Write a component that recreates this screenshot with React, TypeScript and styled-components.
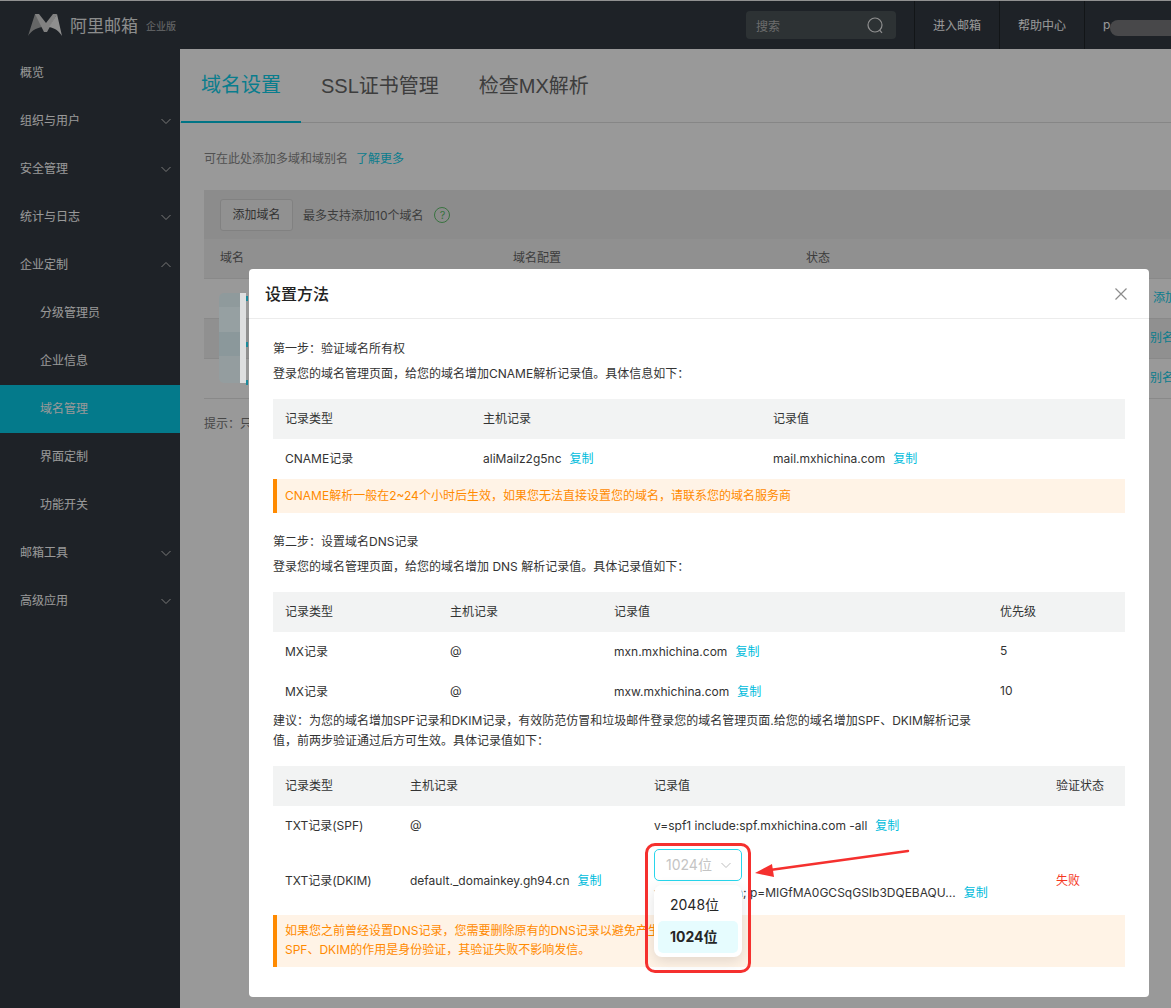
import React from "react";
import styled, { createGlobalStyle } from "styled-components";

const FONT = `Inter, "Noto Sans CJK SC", sans-serif`;
const CYAN = "#00c1de";
const LINK = "#00bcdc";

const GlobalStyle = createGlobalStyle`
  html, body {
    margin: 0;
    height: 100%;
    overflow: hidden;
    background: #fff;
    font-family: ${FONT};
    font-size: 12px;
    color: #333;
  }
  * { box-sizing: border-box; }
`;

const Page = styled.div`
  position: relative;
  width: 1171px;
  height: 1008px;
  overflow: hidden;
`;

const TopBar = styled.header`
  display: flex;
  align-items: center;
  height: 49px;
  background: #323941;
  border-top: 1px solid #f2f2f2;
`;

const Brand = styled.div`
  display: flex;
  align-items: center;
  width: 746px;
  padding-left: 27px;
  color: #fff;
`;

const BrandName = styled.span`
  margin-left: 7px;
  margin-bottom: 2px;
  font-size: 17px;
  opacity: 0.9;
`;

const BrandEdition = styled.span`
  margin-left: 8px;
  margin-top: 1px;
  font-size: 10px;
  opacity: 0.6;
`;

const SearchBox = styled.div`
  display: flex;
  align-items: center;
  justify-content: space-between;
  width: 150px;
  height: 28px;
  margin-right: 18px;
  padding: 0 12px 0 10px;
  border-radius: 4px;
  background: #4b5458;
  color: #b5b5b5;
  font-size: 12px;
`;

const TopLink = styled.div`
  display: flex;
  align-items: center;
  justify-content: center;
  width: 85px;
  height: 48px;
  padding-bottom: 2px;
  border-left: 1px solid #1f2327;
  color: #fff;
  font-size: 12px;
`;

const UserLink = styled(TopLink)`
  position: relative;
  flex: 1;
  justify-content: flex-start;
  padding-left: 18px;
`;

const UserBlur = styled.div`
  position: absolute;
  left: 25px;
  top: 19px;
  width: 70px;
  height: 16px;
  border-radius: 8px;
  background: #78797c;
`;

const Content = styled.div`
  display: flex;
  height: 959px;
`;

const Sidebar = styled.nav`
  flex: 0 0 180px;
  background: #323941;
`;

const NavItem = styled.div<{ $sub?: boolean; $active?: boolean }>`
  display: flex;
  align-items: center;
  justify-content: space-between;
  height: 48px;
  padding: 0 9px 4px ${(p) => (p.$sub ? 40 : 20)}px;
  background: ${(p) => (p.$active ? "#08cbe8" : "transparent")};
  color: #fff;
  font-size: 12px;

  svg {
    margin-top: 4px;
  }
`;

const Main = styled.main`
  flex: 1;
  min-width: 0;
  background: #fff;
`;

const Tabs = styled.div`
  display: flex;
  height: 74px;
  padding-left: 1px;
  border-bottom: 1px solid #e0e0e0;
`;

const Tab = styled.div<{ $active?: boolean }>`
  display: flex;
  align-items: center;
  justify-content: center;
  height: 74px;
  padding: 0 20px 4px;
  border-bottom: ${(p) => (p.$active ? `2px solid ${CYAN}` : "none")};
  color: ${(p) => (p.$active ? "#10d0ec" : "#666")};
  font-family: "Liberation Sans", "Noto Sans CJK SC", sans-serif;
  font-size: 20px;
`;

const MainBody = styled.div`
  padding: 28px 0 0 24px;
`;

const HintLine = styled.div`
  display: flex;
  gap: 8px;
  height: 16px;
  padding-bottom: 3px;
  align-items: center;
  color: #888;
`;

const BgLink = styled.span`
  color: #10d0ec;
`;

const Toolbar = styled.div`
  display: flex;
  align-items: center;
  height: 49px;
  margin-top: 23px;
  padding-left: 16px;
  background: #eaeaea;
  color: #666;
`;

const GhostButton = styled.div`
  display: flex;
  align-items: center;
  justify-content: center;
  width: 73px;
  height: 32px;
  margin-right: 10px;
  padding-bottom: 2px;
  border: 1px solid #d8d8d8;
  border-radius: 3px;
  background: #f2f2f2;
  color: #555;
`;

const HelpMark = styled.span`
  display: flex;
  align-items: center;
  justify-content: center;
  width: 16px;
  height: 16px;
  margin-left: 11px;
  border: 1px solid #5fbf6a;
  border-radius: 50%;
  color: #5fbf6a;
  font-size: 11px;
`;

const BgHead = styled.div`
  display: grid;
  grid-template-columns: 293px 293px 1fr;
  align-items: center;
  height: 40px;
  padding: 0 0 4px 16px;
  background: #f0f0f0;
  color: #666;
  border-bottom: 1px solid #e4e4e4;
`;

const BgRow = styled.div<{ $shade?: boolean }>`
  position: relative;
  height: 40px;
  background: ${(p) => (p.$shade ? "#f1f1f1" : "#fff")};
  border-bottom: 1px solid #e4e4e4;
`;

const BgRowAction = styled.span<{ $left: number }>`
  position: absolute;
  left: ${(p) => p.$left}px;
  top: 9px;
  color: #10d0ec;
  white-space: nowrap;
`;

const BgTip = styled.div`
  margin-top: 15px;
  color: #777;
`;

const Scrim = styled.div`
  position: absolute;
  inset: 0;
  background: rgba(0, 0, 0, 0.4);
`;

/* blurred-out domain names behind the dialog edge */
const Smudge = styled.div`
  position: absolute;
  left: 219px;
  top: 293px;
  width: 30px;
  height: 90px;

  &::before {
    content: "";
    position: absolute;
    left: 0;
    top: 0;
    width: 27px;
    height: 90px;
    border-radius: 5px;
    background: linear-gradient(#8f9a9c 0 16%, #96a0a2 16% 43%, #8b989b 43% 70%, #949d9f 70%);
  }

  &::after {
    content: "";
    position: absolute;
    left: 27px;
    top: 3px;
    width: 2px;
    height: 5px;
    background: #1b8a9b;
    box-shadow: 0 46px 0 #1b8a9b, 0 84px 0 #1b8a9b;
  }
`;

const SmudgeEdge = styled.div`
  position: absolute;
  left: 21px;
  top: 0;
  z-index: 1;
  width: 6px;
  height: 90px;
  background: #dedfe0;
`;

const Modal = styled.section`
  position: absolute;
  left: 249px;
  top: 269px;
  width: 900px;
  height: 728px;
  border-radius: 4px;
  background: #fff;
`;

const ModalHead = styled.div`
  display: flex;
  align-items: center;
  justify-content: space-between;
  height: 50px;
  padding: 0 22px 0 16px;
  border-bottom: 1px solid #ececec;
`;

const ModalTitle = styled.h2`
  margin: 0 0 2px;
  font-size: 16px;
  font-weight: 500;
  color: #222;
`;

const ModalBody = styled.div`
  padding: 17px 24px 0;
`;

const Para = styled.p<{ $top?: number }>`
  margin: ${(p) => p.$top ?? 0}px 0 0;
  line-height: 25px;
  color: #333;
`;

const Advice = styled.p`
  margin: -1px 0 0;
  width: 700px;
  line-height: 20px;
  color: #333;
`;

const Table = styled.table<{ $top: number }>`
  width: 852px;
  margin-top: ${(p) => p.$top}px;
  border-collapse: collapse;
  table-layout: fixed;
`;

const Th = styled.th`
  height: 40px;
  padding: 0 12px 4px;
  background: #f2f3f3;
  font-weight: 400;
  text-align: left;
  color: #333;
`;

const Td = styled.td<{ $h?: number; $fail?: boolean }>`
  position: relative;
  height: ${(p) => p.$h ?? 40}px;
  padding: 0 12px 3px;
  color: ${(p) => (p.$fail ? "#f5371f" : "#333")};
  white-space: nowrap;
`;

const Copy = styled.span`
  margin-left: 8px;
  color: ${LINK};
`;

const Notice = styled.div<{ $h: number }>`
  display: flex;
  align-items: center;
  height: ${(p) => p.$h}px;
  padding: 0 0 2px 8px;
  border-left: 4px solid #ff8a00;
  background: #fff3e6;
  color: #ff8a00;
  line-height: 19px;
`;

const SelectStack = styled.div`
  display: flex;
  flex-direction: column;
  gap: 4px;
  margin-bottom: 8px;
`;

const SelectBox = styled.div`
  display: flex;
  align-items: center;
  gap: 9px;
  width: 88px;
  height: 32px;
  padding: 0 0 2px 11px;
  border: 1px solid #28d6ec;
  border-radius: 5px;
  background: #fff;
  color: #c4c4c4;
  font-size: 14px;

  svg {
    margin-top: 2px;
  }
`;

const Menu = styled.div`
  position: absolute;
  left: 12px;
  top: 39px;
  z-index: 2;
  width: 88px;
  height: 72px;
  padding: 4px;
  border-radius: 8px;
  background: #fff;
  box-shadow: 0 4px 14px rgba(0, 0, 0, 0.12);
`;

const MenuItem = styled.div<{ $selected?: boolean }>`
  display: flex;
  align-items: center;
  height: 32px;
  padding: 0 0 2px 12px;
  border-radius: 5px;
  background: ${(p) => (p.$selected ? "#e6fcfe" : "transparent")};
  color: #262626;
  font-size: 14px;
  font-weight: ${(p) => (p.$selected ? 700 : 400)};
`;

const DkimValue = styled.div`
  line-height: 16px;
`;

const RedFrame = styled.div`
  position: absolute;
  left: 645px;
  top: 843px;
  z-index: 3;
  width: 106px;
  height: 130px;
  border: 3px solid #f5302e;
  border-radius: 10px;
  pointer-events: none;
`;

const ArrowMark = styled.svg`
  position: absolute;
  left: 750px;
  top: 845px;
  z-index: 3;
`;

const Chevron = ({ up, color = "#c8c8c8" }: { up?: boolean; color?: string }) => (
  <svg width="10" height="10" viewBox="0 0 10 10" fill="none">
    <path d={up ? "M.5 7l4.5-4.5L9.5 7" : "M.5 3L5 7.5 9.5 3"} stroke={color} strokeWidth="1" />
  </svg>
);

const Logo = () => (
  <svg width="36" height="24" viewBox="0 0 36 24">
    <path d="M1 23L8 1h3l4 13C9 15 4 18 1 23z" fill="#a9aaaa" />
    <path d="M8 1h4l7 9 7-9h4L20 19h-3z" fill="#d8d8d8" />
    <path d="M30 1l5 22c-3-5-7-8-13-9z" fill="#eeeeee" />
  </svg>
);

const SearchGlyph = () => (
  <svg width="17" height="17" viewBox="0 0 17 17" fill="none" stroke="#eee" strokeWidth="1.2">
    <circle cx="8" cy="8" r="7" />
    <path d="M12.5 13l2.5 2.8" />
  </svg>
);

const nav = [
  { label: "概览" },
  { label: "组织与用户", arrow: "down" },
  { label: "安全管理", arrow: "down" },
  { label: "统计与日志", arrow: "down" },
  { label: "企业定制", arrow: "up" },
  { label: "分级管理员", sub: true },
  { label: "企业信息", sub: true },
  { label: "域名管理", sub: true, active: true },
  { label: "界面定制", sub: true },
  { label: "功能开关", sub: true },
  { label: "邮箱工具", arrow: "down" },
  { label: "高级应用", arrow: "down" },
];

const Cols = ({ widths }: { widths: number[] }) => (
  <colgroup>
    {widths.map((w, i) => (
      <col key={i} width={w} />
    ))}
  </colgroup>
);

export default function App() {
  return (
    <Page>
      <GlobalStyle />
      <TopBar>
        <Brand>
          <Logo />
          <BrandName>阿里邮箱</BrandName>
          <BrandEdition>企业版</BrandEdition>
        </Brand>
        <SearchBox>
          搜索
          <SearchGlyph />
        </SearchBox>
        <TopLink>进入邮箱</TopLink>
        <TopLink>帮助中心</TopLink>
        <UserLink>
          p
          <UserBlur />
        </UserLink>
      </TopBar>
      <Content>
        <Sidebar>
          {nav.map((item) => (
            <NavItem key={item.label} $sub={item.sub} $active={item.active}>
              {item.label}
              {item.arrow && <Chevron up={item.arrow === "up"} />}
            </NavItem>
          ))}
        </Sidebar>
        <Main>
          <Tabs>
            <Tab $active>域名设置</Tab>
            <Tab>SSL证书管理</Tab>
            <Tab>检查MX解析</Tab>
          </Tabs>
          <MainBody>
            <HintLine>
              可在此处添加多域和域别名
              <BgLink>了解更多</BgLink>
            </HintLine>
            <Toolbar>
              <GhostButton>添加域名</GhostButton>
              最多支持添加10个域名
              <HelpMark>?</HelpMark>
            </Toolbar>
            <BgHead>
              <span>域名</span>
              <span>域名配置</span>
              <span>状态</span>
            </BgHead>
            <BgRow>
              <BgRowAction $left={949}>添加</BgRowAction>
            </BgRow>
            <BgRow $shade>
              <BgRowAction $left={946}>别名</BgRowAction>
            </BgRow>
            <BgRow>
              <BgRowAction $left={946}>别名</BgRowAction>
            </BgRow>
            <BgTip>提示：只</BgTip>
          </MainBody>
        </Main>
      </Content>

      <Scrim />
      <Smudge>
        <SmudgeEdge />
      </Smudge>

      <Modal>
        <ModalHead>
          <ModalTitle>设置方法</ModalTitle>
          <svg width="12" height="12" viewBox="0 0 12 12" stroke="#8c8c8c" strokeWidth="1.2">
            <path d="M.5.5l11 11M11.5.5l-11 11" />
          </svg>
        </ModalHead>
        <ModalBody>
          <Para>第一步：验证域名所有权</Para>
          <Para>登录您的域名管理页面，给您的域名增加CNAME解析记录值。具体信息如下：</Para>
          <Table $top={13}>
            <Cols widths={[198, 290, 364]} />
            <thead>
              <tr>
                <Th>记录类型</Th>
                <Th>主机记录</Th>
                <Th>记录值</Th>
              </tr>
            </thead>
            <tbody>
              <tr>
                <Td>CNAME记录</Td>
                <Td>
                  aliMailz2g5nc<Copy>复制</Copy>
                </Td>
                <Td>
                  mail.mxhichina.com<Copy>复制</Copy>
                </Td>
              </tr>
            </tbody>
          </Table>
          <Notice $h={34}>CNAME解析一般在2~24个小时后生效，如果您无法直接设置您的域名，请联系您的域名服务商</Notice>

          <Para $top={16}>第二步：设置域名DNS记录</Para>
          <Para>登录您的域名管理页面，给您的域名增加 DNS 解析记录值。具体记录值如下：</Para>
          <Table $top={13}>
            <Cols widths={[165, 164, 386, 137]} />
            <thead>
              <tr>
                <Th>记录类型</Th>
                <Th>主机记录</Th>
                <Th>记录值</Th>
                <Th>优先级</Th>
              </tr>
            </thead>
            <tbody>
              <tr>
                <Td>MX记录</Td>
                <Td>@</Td>
                <Td>
                  mxn.mxhichina.com<Copy>复制</Copy>
                </Td>
                <Td>5</Td>
              </tr>
              <tr>
                <Td>MX记录</Td>
                <Td>@</Td>
                <Td>
                  mxw.mxhichina.com<Copy>复制</Copy>
                </Td>
                <Td>10</Td>
              </tr>
            </tbody>
          </Table>

          <Advice>
            建议：为您的域名增加SPF记录和DKIM记录，有效防范仿冒和垃圾邮件登录您的域名管理页面.给您的域名增加SPF、DKIM解析记录值，前两步验证通过后方可生效。具体记录值如下：
          </Advice>
          <Table $top={15}>
            <Cols widths={[125, 244, 402, 81]} />
            <thead>
              <tr>
                <Th>记录类型</Th>
                <Th>主机记录</Th>
                <Th>记录值</Th>
                <Th>验证状态</Th>
              </tr>
            </thead>
            <tbody>
              <tr>
                <Td>TXT记录(SPF)</Td>
                <Td>@</Td>
                <Td>
                  v=spf1 include:spf.mxhichina.com -all<Copy>复制</Copy>
                </Td>
                <Td />
              </tr>
              <tr>
                <Td $h={69}>TXT记录(DKIM)</Td>
                <Td $h={69}>
                  default._domainkey.gh94.cn<Copy>复制</Copy>
                </Td>
                <Td $h={69}>
                  <SelectStack>
                    <SelectBox>
                      1024位
                      <Chevron color="#bdbdbd" />
                    </SelectBox>
                    <DkimValue>
                      v=DKIM1; k=rsa; p=MIGfMA0GCSqGSIb3DQEBAQU...<Copy>复制</Copy>
                    </DkimValue>
                  </SelectStack>
                  <Menu>
                    <MenuItem>2048位</MenuItem>
                    <MenuItem $selected>1024位</MenuItem>
                  </Menu>
                </Td>
                <Td $h={69} $fail>
                  失败
                </Td>
              </tr>
            </tbody>
          </Table>
          <Notice $h={52}>
            如果您之前曾经设置DNS记录，您需要删除原有的DNS记录以避免产生冲突。
            <br />
            SPF、DKIM的作用是身份验证，其验证失败不影响发信。
          </Notice>
        </ModalBody>
      </Modal>

      <RedFrame />
      <ArrowMark width="165" height="35" viewBox="0 0 165 35" fill="none">
        <path d="M158 6L20 25" stroke="#f5302e" strokeWidth="2.5" strokeLinecap="round" />
        <path d="M5 28l17-9 2 13z" fill="#f5302e" />
      </ArrowMark>
    </Page>
  );
}
